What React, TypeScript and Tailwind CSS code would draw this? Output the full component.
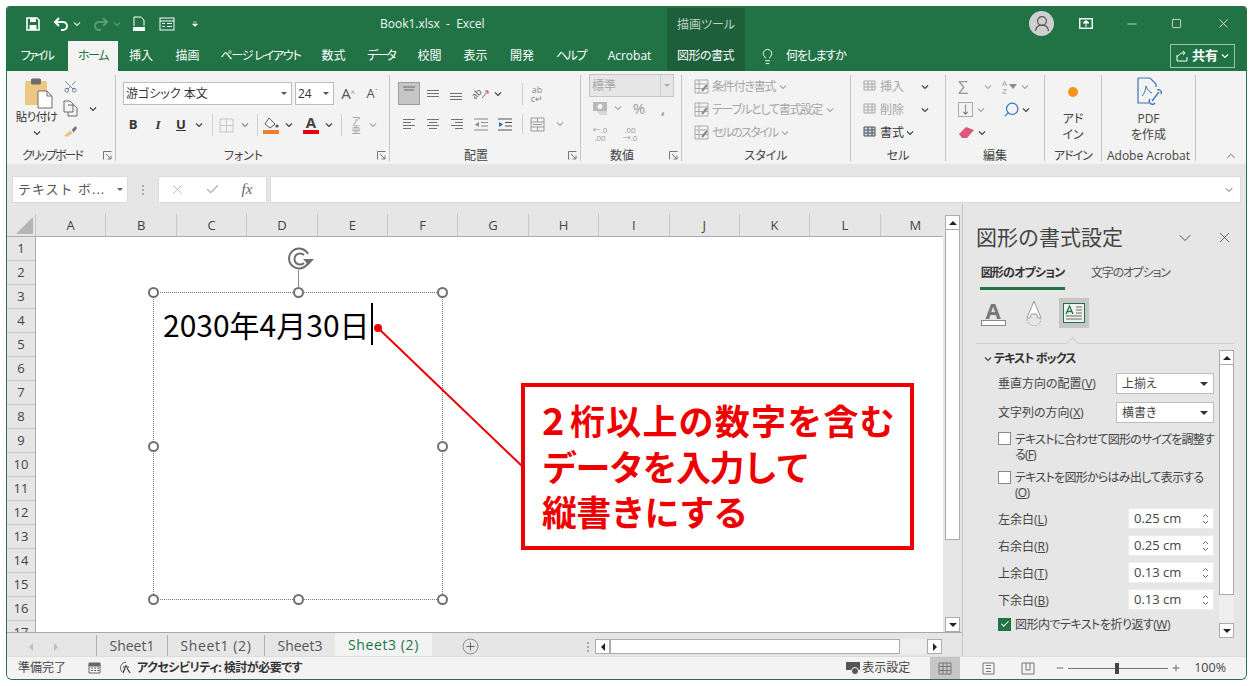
import React from 'react';
import { ChevronDown, ChevronUp, Lightbulb, Search, Scissors, X, Check, Minus, Plus, Square } from 'lucide-react';

const Chev = ({ className = 'text-[#444]' }: { className?: string }) => (
  <svg width="8" height="6" viewBox="0 0 8 6" className={`shrink-0 ${className}`}>
    <path d="M1 1.5 L4 4.5 L7 1.5" fill="none" stroke="currentColor" strokeWidth="1.2" />
  </svg>
);

const Launcher = () => (
  <svg width="9" height="9" viewBox="0 0 9 9" className="absolute right-[3px] bottom-[1px] text-[#777]">
    <path d="M0.5 8.5V0.5H8.5M3 3L8 8M8 4.5V8H4.5" fill="none" stroke="currentColor" />
  </svg>
);

const Group = ({ w, label, launcher, labelClass = '', children }: { w: string; label: string; launcher?: boolean; labelClass?: string; children?: React.ReactNode }) => (
  <div className={`${w} relative shrink-0 h-[86px] mt-[4px] border-r border-[#c6c6c6] flex flex-col`}>
    <div className="h-[73px] shrink-0 relative">{children}</div>
    <div className={`text-[12px] leading-[16px] text-center text-[#444] whitespace-nowrap ${launcher ? 'pr-[18px]' : ''} ${labelClass}`}>{label}</div>
    {launcher && <Launcher />}
  </div>
);

const Slot = ({ w, children }: { w: string; children?: React.ReactNode }) => (
  <div className={`${w} shrink-0 flex items-center justify-center`}>{children}</div>
);

const VSep = () => <div className="w-px h-[22px] bg-[#d0d0d0] shrink-0" />;

const Lines = ({ pattern }: { pattern: 'left' | 'center' | 'right' }) => (
  <svg width="14" height="12" viewBox="0 0 14 12" className="text-[#707070]">
    {pattern === 'left' && <path d="M1 1.5H13M1 4.5H9M1 7.5H13M1 10.5H9" stroke="currentColor" />}
    {pattern === 'center' && <path d="M1 1.5H13M3 4.5H11M1 7.5H13M3 10.5H11" stroke="currentColor" />}
    {pattern === 'right' && <path d="M1 1.5H13M5 4.5H13M1 7.5H13M5 10.5H13" stroke="currentColor" />}
  </svg>
);

const Clipboard = () => (
  <svg width="28" height="31" viewBox="0 0 28 31" className="ml-[5px]">
    <rect x="0" y="3" width="22" height="24" rx="1.5" fill="#ecc782" />
    <rect x="6" y="0.500" width="10" height="6" rx="1.5" fill="#6d6d6d" />
    <path d="M13 13H22L27 18V30H13Z" fill="#fff" stroke="#6d6d6d" />
    <path d="M22 13V18H27" fill="none" stroke="#6d6d6d" />
  </svg>
);

const RotateHandle = () => (
  <svg width="28" height="26" viewBox="0 0 28 26" className="text-[#6e6e6e]">
    <path d="M21 17A10 10 0 1 1 21 8" fill="none" stroke="currentColor" strokeWidth="2" />
    <path d="M17 17A5.6 5.6 0 1 1 17 9" fill="none" stroke="currentColor" strokeWidth="2" />
    <path d="M16 13H27L21.5 19Z" fill="currentColor" />
  </svg>
);

const tabs: { t: string; w: string; c?: string }[] = [
  { t: '挿入', w: 'w-[46px]' },
  { t: '描画', w: 'w-[47px]' },
  { t: 'ページ レイアウト', w: 'w-[99px]', c: 'tracking-[-1.2px]' },
  { t: '数式', w: 'w-[47px]' },
  { t: 'データ', w: 'w-[48px]', c: 'tracking-[-2px]' },
  { t: '校閲', w: 'w-[49px]' },
  { t: '表示', w: 'w-[43px]' },
  { t: '開発', w: 'w-[50px]' },
  { t: 'ヘルプ', w: 'w-[48px]', c: 'tracking-[-1.5px]' },
  { t: 'Acrobat', w: 'w-[69px]' },
];

const styleRows = [
  { t: '条件付き書式', c: 'tracking-[-1.2px]' },
  { t: 'テーブルとして書式設定', c: 'tracking-[-1.2px]' },
  { t: 'セルのスタイル', c: 'tracking-[-1.7px]' },
];

const cols = ['A', 'B', 'C', 'D', 'E', 'F', 'G', 'H', 'I', 'J', 'K', 'L', 'M'];
const rows = Array.from({ length: 17 }, (_, i) => i + 1);

const handleX = ['left-[-6px]', 'left-[139px]', 'right-[-6px]'];

const Handle = ({ pos }: { pos: string }) => (
  <div className={`absolute ${pos} w-[11px] h-[11px] rounded-full bg-white border-2 border-[#707070]`} />
);

const Spin = ({ label, u, val }: { label: string; u: string; val: string }) => (
  <div className="flex items-center h-[21px] mb-[6px]">
    <span className="w-[152px] pl-[22px] pt-[3px] text-[12px] text-[#444] whitespace-nowrap">
      {label}(<span className="underline">{u}</span>)
    </span>
    <div className="w-[86px] h-[21px] bg-white border border-[#ececec] flex items-center pl-[5px] pr-[4px] justify-between text-[13px] text-[#444]">
      <span className="pt-[1px]">{val}</span>
      <svg width="7" height="12" viewBox="0 0 7 12" className="text-[#666]">
        <path d="M1 4L3.5 1.5L6 4M1 8L3.5 10.5L6 8" fill="none" stroke="currentColor" />
      </svg>
    </div>
  </div>
);

const Combo = ({ label, u, val }: { label: string; u: string; val: string }) => (
  <div className="flex items-center h-[21px] mb-[8px]">
    <span className="w-[140px] pl-[22px] pt-[1px] text-[12px] text-[#444] whitespace-nowrap">
      {label}(<span className="underline">{u}</span>)
    </span>
    <div className="w-[98px] h-[21px] bg-white border border-[#bdbdbd] flex items-center pl-[5px] pr-[5px] justify-between text-[12px] text-[#444]">
      <span>{val}</span>
      <span className="w-0 h-0 border-x-[4px] border-x-transparent border-t-[4px] border-t-[#333]" />
    </div>
  </div>
);

const ScrollBtn = ({ dir }: { dir: 'up' | 'down' | 'left' | 'right' }) => (
  <div className="w-[15px] h-[15px] bg-white border border-[#ababab] flex items-center justify-center shrink-0">
    {dir === 'up' && <span className="w-0 h-0 border-x-[4px] border-x-transparent border-b-[4px] border-b-[#222]" />}
    {dir === 'down' && <span className="w-0 h-0 border-x-[4px] border-x-transparent border-t-[4px] border-t-[#222]" />}
    {dir === 'left' && <span className="w-0 h-0 border-y-[4px] border-y-transparent border-r-[4px] border-r-[#222]" />}
    {dir === 'right' && <span className="w-0 h-0 border-y-[4px] border-y-transparent border-l-[4px] border-l-[#222]" />}
  </div>
);

const App = () => {
  return (
    <div className="w-[1253px] h-[686px] bg-white pl-[6px] pt-[6px] overflow-hidden font-['Open_Sans','Noto_Sans_CJK_JP',sans-serif] [font-feature-settings:'palt']">
      <div className="w-[1241px] h-[674px] flex flex-col rounded-b-[6px] rounded-t-[4px] overflow-hidden border-x border-b border-[#217346] bg-[#e6e6e6]">
        {/* Title bar */}
        <div className="h-[35px] shrink-0 bg-[#217346] flex items-center text-white relative">
          <div className="flex items-center pl-[18px] w-[373px]">
            <svg width="16" height="16" viewBox="0 0 16 16" className="mr-[12px]">
              <path d="M2 2H12L14 4V14H2Z" fill="none" stroke="#fff" strokeWidth="1.6" />
              <rect x="5" y="2" width="6" height="4" fill="#fff" />
              <rect x="4.5" y="9" width="7" height="5" fill="#fff" />
            </svg>
            <svg width="16" height="14" viewBox="0 0 16 14" className="mr-[4px]">
              <path d="M6 1L2 5L6 9M2 5H10A4 4 0 0 1 10 13H8" fill="none" stroke="#fff" strokeWidth="2" />
            </svg>
            <Chev className="text-[#cfe3d6] mr-[12px]" />
            <svg width="16" height="14" viewBox="0 0 16 14" className="mr-[4px]">
              <path d="M10 1L14 5L10 9M14 5H6A4 4 0 0 0 6 13H8" fill="none" stroke="#5f9a78" strokeWidth="2" />
            </svg>
            <Chev className="text-[#5f9a78] mr-[11px]" />
            <svg width="14" height="16" viewBox="0 0 14 16" className="mr-[13px]">
              <path d="M2 1H9L12 4V10M2 1V10" fill="none" stroke="#fff" />
              <rect x="1" y="11" width="12" height="4" fill="#fff" />
            </svg>
            <svg width="16" height="14" viewBox="0 0 16 14" className="mr-[17px]">
              <rect x="1" y="1" width="14" height="12" fill="none" stroke="#fff" />
              <path d="M1 4H15M3 6.5H6M8 6.5H13M3 9.5H6M8 9.5H13" stroke="#fff" />
            </svg>
            <svg width="6" height="6" viewBox="0 0 6 6"><path d="M1 1H5M0.5 3L3 5.5L5.5 3Z" stroke="#fff" fill="#fff" strokeWidth="0.6" /></svg>
          </div>
          <span className="w-[287px] text-[12px] whitespace-pre text-[#f2f7f4]">Book1.xlsx  -  Excel</span>
          <div className="w-[78px] h-[33px] mt-[2px] bg-[#1e5f3b] flex items-center justify-center text-[12px] text-[#b9d3c3]">描画ツール</div>
          <div className="flex-1 flex items-center justify-end pr-[15px]">
            <div className="w-[25px] h-[25px] rounded-full bg-[#cfcfcf] flex items-center justify-center mr-[25px]">
              <svg width="16" height="17" viewBox="0 0 16 17">
                <circle cx="8" cy="6" r="4.4" fill="none" stroke="#555" strokeWidth="1.2" />
                <path d="M1.5 16C2 12 5 10.2 8 10.2S14 12 14.5 16" fill="none" stroke="#555" strokeWidth="1.2" />
              </svg>
            </div>
            <svg width="14" height="11" viewBox="0 0 14 11" className="mr-[32px]">
              <rect x="0.75" y="0.75" width="12.5" height="9.5" fill="none" stroke="#fff" strokeWidth="1.4" />
              <path d="M4 5L7 2.5L10 5ZM7 4V9" stroke="#fff" fill="#fff" />
            </svg>
            <Minus size={14} strokeWidth={1.2} className="mr-[32px]" />
            <Square size={11} strokeWidth={1.6} className="mr-[34px]" />
            <X size={15} strokeWidth={1.2} />
          </div>
        </div>

        {/* Tabs */}
        <div className="h-[30px] shrink-0 bg-[#217346] flex items-center text-white text-[12px] relative">
          <div className="w-[61px] text-center pr-[2px] tracking-[-2.5px]">ファイル</div>
          <div className="w-[50px] h-full bg-[#f3f3f3] text-[#217346] flex items-center justify-center tracking-[-1.5px]">ホーム</div>
          {tabs.map((tab) => (
            <div key={tab.t} className={`${tab.w} text-center whitespace-nowrap ${tab.c ?? ''}`}>{tab.t}</div>
          ))}
          <div className="w-[78px] h-full bg-[#1e5f3b] flex items-center justify-start pl-[10px] ml-[3px] whitespace-nowrap tracking-[-0.5px]">図形の書式</div>
          <Lightbulb size={17} strokeWidth={1.3} className="ml-[14px] mr-[10px]" />
          <span className="tracking-[-1.2px]">何をしますか</span>
          <div className="ml-auto mr-[11px] w-[65px] h-[24px] border border-[#9cc7ae] flex items-center justify-center gap-[3px]">
            <svg width="13" height="12" viewBox="0 0 13 12">
              <path d="M1 5V11H11V7M1 7L5 3H9M7 1L9 3L7 5" fill="none" stroke="#fff" />
            </svg>
            <span className="font-bold text-[13px]">共有</span>
            <Chev className="text-white" />
          </div>
        </div>

        {/* Ribbon */}
        <div className="h-[93px] shrink-0 bg-[#f3f3f3] flex">
          <Group w="w-[109px]" label="クリップボード" launcher labelClass="tracking-[-2px]">
            <div className="flex h-full">
              <div className="w-[55px] pl-[4px] pt-[3px] flex flex-col items-center">
                <Clipboard />
                <span className="text-[11.5px] leading-[16px] whitespace-nowrap text-[#333] tracking-[-0.6px]">貼り付け</span>
                <span className="mt-[5px]"><Chev /></span>
              </div>
              <div className="w-[16px] flex flex-col items-center pt-[4px]">
                <Scissors size={15} strokeWidth={1.2} className="text-[#44638f] -rotate-90" />
                <svg width="15" height="17" viewBox="0 0 15 17" className="text-[#6b6b6b] mt-[6px]">
                  <path d="M1 1H7L10 4V12H1ZM5 5H11L14 8V16H5V12" fill="#f3f3f3" stroke="currentColor" />
                </svg>
                <svg width="15" height="13" viewBox="0 0 17 14" className="mt-[8px]">
                  <path d="M1 12L8 6L11 9L5 13Z" fill="#e9c27c" />
                  <path d="M10 5L14 1L16 3L12 8Z" fill="#707070" />
                </svg>
              </div>
              <div className="pl-[11px] pt-[31px]"><Chev /></div>
            </div>
          </Group>

          <Group w="w-[274px]" label="フォント" launcher>
            <div className="pl-[7px] pt-[7px] flex flex-col gap-[9px]">
              <div className="flex items-center h-[23px]">
                <div className="w-[169px] h-[23px] bg-white border border-[#bdbdbd] flex items-center justify-between px-[2px] pr-[4px] text-[12px] text-[#333]">
                  <span>游ゴシック 本文</span>
                  <span className="w-0 h-0 border-x-[3px] border-x-transparent border-t-[3px] border-t-[#555]" />
                </div>
                <div className="w-[39px] ml-[3px] h-[23px] bg-white border border-[#bdbdbd] flex items-center justify-between px-[2px] pr-[4px] text-[12px] text-[#333]">
                  <span>24</span>
                  <span className="w-0 h-0 border-x-[3px] border-x-transparent border-t-[3px] border-t-[#555]" />
                </div>
                <span className="ml-[2px] w-[24px] text-center text-[15px] text-[#555]">A<sup className="text-[7px] text-[#3b74b5]">^</sup></span>
                <span className="w-[24px] text-center text-[13px] text-[#555]">A<sup className="text-[7px] text-[#3b74b5]">ˇ</sup></span>
              </div>
              <div className="flex items-center h-[22px] text-[13px] text-[#333]">
                <Slot w="w-[20px]"><span className="font-bold">B</span></Slot>
                <Slot w="w-[30px]"><span className="italic font-bold font-['Liberation_Serif']">I</span></Slot>
                <Slot w="w-[16px]"><span className="font-bold underline">U</span></Slot>
                <Slot w="w-[20px]"><Chev /></Slot>
                <Slot w="w-[6px]"><VSep /></Slot>
                <Slot w="w-[22px]">
                  <svg width="15" height="15" viewBox="0 0 15 15"><path d="M1 1H14V14H1ZM7.5 1V14M1 7.5H14" fill="none" stroke="#c8c8c8" /></svg>
                </Slot>
                <Slot w="w-[16px]"><Chev className="text-[#888]" /></Slot>
                <Slot w="w-[8px]"><VSep /></Slot>
                <Slot w="w-[20px]">
                  <svg width="17" height="17" viewBox="0 0 17 17">
                    <path d="M6 1L12 7L7 11L2 7Z" fill="#fff" stroke="#555" />
                    <circle cx="14" cy="9" r="1.6" fill="#555" />
                    <rect x="0" y="13" width="16" height="4" fill="#ed7d31" />
                  </svg>
                </Slot>
                <Slot w="w-[16px]"><Chev /></Slot>
                <Slot w="w-[28px]">
                  <div className="flex flex-col items-center leading-none">
                    <span className="text-[15px] font-bold text-[#444] leading-[13px]">A</span>
                    <span className="w-[16px] h-[4px] bg-[#e60012] mt-[1px]" />
                  </div>
                </Slot>
                <Slot w="w-[8px]"><Chev /></Slot>
                <Slot w="w-[16px]"><VSep /></Slot>
                <Slot w="w-[14px]"><span className="text-[9px] leading-[9px] text-[#999] w-[10px] text-center">ア亜</span></Slot>
                <Slot w="w-[20px]"><Chev className="text-[#aaa]" /></Slot>
              </div>
            </div>
          </Group>

          <Group w="w-[191px]" label="配置" launcher>
            <div className="pl-[8px] pt-[7px] flex flex-col gap-[10px]">
              <div className="flex items-center h-[23px]">
                <div className="w-[22px] h-[23px] bg-[#c6c6c6] border border-[#9d9d9d] flex items-start justify-center pt-[3px]">
                  <svg width="14" height="6" viewBox="0 0 14 6"><path d="M1 1H13M2 4H12" stroke="#666" /></svg>
                </div>
                <Slot w="w-[26px]">
                  <svg width="14" height="9" viewBox="0 0 14 9"><path d="M1 1.5H13M1 4.5H13M1 7.5H13" stroke="#707070" /></svg>
                </Slot>
                <Slot w="w-[20px]">
                  <svg width="14" height="12" viewBox="0 0 14 12"><path d="M1 5.5H13M1 8.5H13M1 11.5H13" stroke="#707070" /></svg>
                </Slot>
                <Slot w="w-[28px]">
                  <div className="flex items-center">
                    <span className="text-[9px] leading-none text-[#555] -rotate-45">ab</span>
                    <svg width="8" height="12" viewBox="0 0 8 12"><path d="M1 10L7 3M4 3H7V6" fill="none" stroke="#bf4d6a" /></svg>
                  </div>
                </Slot>
                <Chev />
                <div className="w-px h-[22px] bg-[#d0d0d0] ml-[20px]" />
                <Slot w="w-[20px] ml-[4px]">
                  <span className="text-[9px] leading-[9px] text-[#888] text-center">ab<br />c↵</span>
                </Slot>
              </div>
              <div className="flex items-center h-[18px]">
                <Slot w="w-[22px]"><Lines pattern="left" /></Slot>
                <Slot w="w-[26px]"><Lines pattern="center" /></Slot>
                <Slot w="w-[22px]"><Lines pattern="right" /></Slot>
                <Slot w="w-[26px]">
                  <svg width="16" height="13" viewBox="0 0 16 13"><path d="M1 1H15M8 4.5H15M8 8H15M1 12H15" stroke="#888" /><path d="M6 4L2 6.5L6 9Z" fill="#7a8fa8" /></svg>
                </Slot>
                <Slot w="w-[22px]">
                  <svg width="16" height="13" viewBox="0 0 16 13"><path d="M1 1H15M8 4.5H15M8 8H15M1 12H15" stroke="#555" /><path d="M2 4L6 6.5L2 9Z" fill="#2f6ca8" /></svg>
                </Slot>
                <Slot w="w-[12px]"><div className="w-px h-[20px] bg-[#d0d0d0]" /></Slot>
                <Slot w="w-[18px]">
                  <svg width="15" height="15" viewBox="0 0 15 15"><path d="M1 1H14V14H1ZM1 5H14M1 10H14M7.5 1V5M7.5 10V14M3 7.5H12" fill="none" stroke="#999" /></svg>
                </Slot>
                <Slot w="w-[28px]"><Chev className="text-[#aaa]" /></Slot>
              </div>
            </div>
          </Group>

          <Group w="w-[101px]" label="数値" launcher>
            <div className="pl-[8px] -mt-[1px] flex flex-col">
              <div className="w-[85px] h-[23px] bg-[#e6e6e6] border border-[#c6c6c6] flex items-center justify-between text-[12px] text-[#a6a6a6] pl-[2px]">
                <span>標準</span>
                <span className="w-[13px] h-full border-l border-[#d0d0d0] flex items-center justify-center">
                  <span className="w-0 h-0 border-x-[3px] border-x-transparent border-t-[3px] border-t-[#aaa]" />
                </span>
              </div>
              <div className="flex items-center h-[22px] text-[#9a9a9a]">
                <Slot w="w-[22px]">
                  <svg width="16" height="15" viewBox="0 0 16 15"><rect x="1" y="1" width="14" height="9" fill="#b9b9b9" /><circle cx="8" cy="5.5" r="2.6" fill="#f3f3f3" /><path d="M5 11H15M7 13H15" stroke="#bbb" /></svg>
                </Slot>
                <Slot w="w-[14px]"><Chev className="text-[#aaa]" /></Slot>
                <Slot w="w-[28px]"><span className="text-[15px]">%</span></Slot>
                <Slot w="w-[20px]"><span className="text-[14px] font-bold">,</span></Slot>
              </div>
              <div className="flex items-center h-[22px] mt-[4px] text-[8px] leading-[8px] text-[#9a9a9a]">
                <Slot w="w-[22px]"><span className="text-center">←.0<br />.00</span></Slot>
                <Slot w="w-[30px] ml-[4px]"><span className="text-center">.00<br />→.0</span></Slot>
              </div>
            </div>
          </Group>

          <Group w="w-[169px]" label="スタイル">
            <div className="pl-[12px] flex flex-col text-[12px] text-[#a6a6a6] whitespace-nowrap">
              {styleRows.map((s) => (
                <div key={s.t} className="h-[23px] flex items-center">
                  <svg width="15" height="15" viewBox="0 0 15 15" className="mr-[3px]">
                    <path d="M1 1H14V14H1ZM1 5H14M1 9.500H14M5 1V14" fill="none" stroke="#aaa" />
                    <path d="M8 12L13 6" stroke="#888" strokeWidth="2" />
                  </svg>
                  <span className={`${s.c} mr-[4px]`}>{s.t}</span>
                  <Chev className="text-[#aaa]" />
                </div>
              ))}
            </div>
          </Group>

          <Group w="w-[95px]" label="セル">
            <div className="pl-[11px] flex flex-col text-[12px] whitespace-nowrap">
              {[
                { t: '挿入', c: 'text-[#a6a6a6]' },
                { t: '削除', c: 'text-[#a6a6a6]' },
                { t: '書式', c: 'text-[#333]' },
              ].map((r, i) => (
                <div key={r.t} className={`h-[23px] flex items-center ${r.c}`}>
                  <svg width="15" height="15" viewBox="0 0 15 15" className="mr-[3px]">
                    <path d="M2 2H13V11H2ZM2 5H13M2 8H13M6 2V11M10 2V11" fill={i === 2 ? '#c5d9ee' : 'none'} stroke={i === 2 ? '#555' : '#aaa'} />
                  </svg>
                  <span>{r.t}</span>
                  <span className={i === 2 ? 'ml-[2px]' : 'ml-[17px]'}><Chev /></span>
                </div>
              ))}
            </div>
          </Group>

          <Group w="w-[99px]" label="編集">
            <div className="pl-[12px] flex flex-col">
              <div className="h-[23px] flex items-center">
                <span className="w-[16px] text-[18px] leading-none text-[#999]">Σ</span>
                <span className="ml-[10px]"><Chev className="text-[#aaa]" /></span>
                <span className="ml-[10px] text-[8px] leading-[8px] text-[#999] text-center">A<br />Z</span>
                <span className="ml-[2px] w-0 h-0 border-x-[4px] border-x-transparent border-t-[5px] border-t-[#888]" />
                <span className="ml-[4px]"><Chev className="text-[#aaa]" /></span>
              </div>
              <div className="h-[23px] flex items-center">
                <div className="w-[15px] h-[15px] border border-[#aaa] flex items-center justify-center text-[11px] leading-none text-[#666]">↓</div>
                <span className="ml-[4px]"><Chev className="text-[#aaa]" /></span>
                <Search size={17} strokeWidth={1.6} className="ml-[18px] text-[#2f6fb5] -scale-x-100" />
                <span className="ml-[2px]"><Chev /></span>
              </div>
              <div className="h-[23px] flex items-center">
                <svg width="17" height="13" viewBox="0 0 17 13"><path d="M1 8L8 1L16 4L9 12L4 12Z" fill="#e0567a" /></svg>
                <span className="ml-[3px]"><Chev /></span>
              </div>
            </div>
          </Group>

          <Group w="w-[57px]" label="アドイン" labelClass="tracking-[-1px]">
            <div className="flex flex-col items-center h-full text-[12px] leading-[16px] text-[#444]">
              <span className="w-[10px] h-[10px] rounded-full bg-[#f7941d] mt-[12px] mb-[14px]" />
              <span>アド</span>
              <span>イン</span>
            </div>
          </Group>

          <Group w="w-[94px]" label="Adobe Acrobat">
            <div className="flex flex-col items-center h-full text-[12px] leading-[16px] text-[#444]">
              <svg width="26" height="28" viewBox="0 0 26 28" className="mb-[6px] mt-[2px]">
                <path d="M2 1H14L20 7V10M2 1V26H13" fill="none" stroke="#3b74b5" strokeWidth="1.2" />
                <path d="M6 19C9 16 10 11 10 9C11 12 13 15 16 16" fill="none" stroke="#3b74b5" />
                <path d="M16 24L23 15M14 22A3 3 0 0 0 19 26M21 13A3 3 0 0 1 25 17" fill="none" stroke="#3b74b5" strokeWidth="1.3" />
              </svg>
              <span>PDF</span>
              <span>を作成</span>
            </div>
          </Group>

          <div className="flex-1 flex items-end justify-end pr-[8px] pb-[1px]">
            <ChevronUp size={14} strokeWidth={1.4} className="text-[#555]" />
          </div>
        </div>

        {/* Formula bar */}
        <div className="h-[40px] shrink-0 flex items-end pb-[1px] pl-[5px] pr-[5px] bg-[#e6e6e6]">
          <div className="w-[116px] h-[27px] bg-white border border-[#dcdcdc] flex items-center justify-between pl-[5px] pr-[4px] text-[13px] text-[#555] [font-feature-settings:normal] tracking-[1px]">
            <span className="whitespace-nowrap">テキスト ボ...</span>
            <span className="w-0 h-0 border-x-[3px] border-x-transparent border-t-[3px] border-t-[#666]" />
          </div>
          <div className="w-[30px] h-[27px] flex flex-col items-center justify-center gap-[2px]">
            <span className="w-[2px] h-[2px] bg-[#aaa]" />
            <span className="w-[2px] h-[2px] bg-[#aaa]" />
            <span className="w-[2px] h-[2px] bg-[#aaa]" />
          </div>
          <div className="w-[109px] h-[27px] bg-white border border-[#dcdcdc] flex items-center text-[#aaa]">
            <Slot w="w-[36px]"><X size={15} strokeWidth={1.3} /></Slot>
            <Slot w="w-[35px]"><Check size={15} strokeWidth={1.8} /></Slot>
            <Slot w="w-[34px]"><span className="font-['Liberation_Serif'] italic text-[15px] text-[#666]">fx</span></Slot>
          </div>
          <div className="flex-1 h-[27px] ml-[3px] bg-white border border-[#dcdcdc] flex items-center justify-end pr-[5px]">
            <ChevronDown size={12} strokeWidth={2} className="text-[#666]" />
          </div>
        </div>

        {/* Main */}
        <div className="flex-1 flex min-h-0">
          <div className="w-[955px] shrink-0 flex flex-col">
            <div className="h-[10px] shrink-0" />
            <div className="h-[419px] shrink-0 flex border-b border-[#a8a8a8]">
              <div className="w-[936px] shrink-0 flex flex-col overflow-hidden">
                <div className="h-[23px] shrink-0 flex bg-[#e6e6e6] border-b border-[#ababab]">
                  <div className="w-[29px] shrink-0 border-r border-[#c6c6c6] flex items-end justify-end pr-[2px] pb-[2px]">
                    <div className="w-0 h-0 border-l-[17px] border-l-transparent border-b-[17px] border-b-[#b4b4b4]" />
                  </div>
                  {cols.map((c) => (
                    <div key={c} className="w-[70.4px] shrink-0 border-r border-[#c6c6c6] text-center text-[13px] leading-[22px] text-[#444]">{c}</div>
                  ))}
                </div>
                <div className="flex-1 flex min-h-0">
                  <div className="w-[29px] shrink-0 bg-[#e6e6e6] border-r border-[#ababab] overflow-hidden">
                    {rows.map((r) => (
                      <div key={r} className="h-[24px] border-b border-[#c6c6c6] text-center text-[13px] leading-[23px] text-[#444]">{r}</div>
                    ))}
                  </div>
                  <div className="flex-1 bg-white relative overflow-hidden">
                    {/* text box */}
                    <div className="absolute left-[117px] top-[55px] w-[290px] h-[308px] border border-dotted border-[#777]">
                      {handleX.map((x) => (
                        <React.Fragment key={x}>
                          <Handle pos={`${x} top-[-6px]`} />
                          <Handle pos={`${x} bottom-[-6px]`} />
                        </React.Fragment>
                      ))}
                      <Handle pos="left-[-6px] top-[148px]" />
                      <Handle pos="right-[-6px] top-[148px]" />
                      <div className="absolute left-[144px] top-[-23px] w-px h-[18px] bg-[#8a8a8a]" />
                      <div className="absolute left-[133px] top-[-47px]"><RotateHandle /></div>
                      <div className="absolute left-[9px] top-[9px] flex items-center h-[44px] font-['Noto_Sans_CJK_JP',sans-serif] text-[30px] text-black whitespace-nowrap [font-feature-settings:normal]">
                        <span>2030年4月30日</span>
                        <span className="w-[2px] h-[42px] bg-black ml-[1px]" />
                      </div>
                    </div>
                    {/* callout line */}
                    <svg className="absolute inset-0 pointer-events-none" width="907" height="395" viewBox="0 0 907 395">
                      <circle cx="342" cy="91" r="4" fill="#ee0000" />
                      <path d="M342 91L488 231" stroke="#ee0000" strokeWidth="2" />
                    </svg>
                    <div className="absolute left-[485px] top-[146px] w-[393px] h-[167px] bg-white border-[4px] border-[#ee0000] pl-[17px] pt-[9px] font-['Noto_Sans_CJK_JP',sans-serif] [font-feature-settings:normal] font-bold text-[35px] leading-[45.5px] text-[#ee0000]">
                      <div className="whitespace-nowrap tracking-[1.2px]"><span className="inline-block w-[28px] text-[38px]">2</span>桁以上の数字を含む</div>
                      <div className="whitespace-nowrap tracking-[-1.500px]">データを入力して</div>
                      <div className="whitespace-nowrap tracking-[-0.8px]">縦書きにする</div>
                    </div>
                  </div>
                </div>
              </div>
              <div className="flex-1 bg-[#e6e6e6] pl-[2px] pt-[1px] flex flex-col justify-between">
                <div className="flex flex-col">
                  <ScrollBtn dir="up" />
                  <div className="w-[15px] h-[310px] bg-white border-x border-b border-[#ababab]" />
                </div>
                <ScrollBtn dir="down" />
              </div>
            </div>
            {/* Sheet tabs */}
            <div className="flex-1 flex items-stretch text-[14px] text-[#555]">
              <div className="w-[89px] flex items-center pl-[22px] gap-[21px] shrink-0">
                <span className="w-0 h-0 border-y-[4px] border-y-transparent border-r-[4px] border-r-[#c0c0c0]" />
                <span className="w-0 h-0 border-y-[4px] border-y-transparent border-l-[4px] border-l-[#c0c0c0]" />
              </div>
              <div className="w-[71px] border-l border-[#b0b0b0] mt-[2px] mb-[4px] flex items-center justify-center">Sheet1</div>
              <div className="w-[97px] border-l border-[#b0b0b0] mt-[2px] mb-[4px] flex items-center justify-center tracking-[0.6px]">Sheet1 (2)</div>
              <div className="w-[71px] border-l border-[#b0b0b0] mt-[2px] mb-[4px] flex items-center justify-center">Sheet3</div>
              <div className="w-[97px] bg-[#f3f3f3] border-b-2 border-[#217346] mb-[1px] pb-[2px] flex items-center justify-center text-[#217346] tracking-[0.6px]">Sheet3 (2)</div>
              <div className="w-[148px] flex items-center pl-[30px] shrink-0">
                <svg width="17" height="17" viewBox="0 0 17 17">
                  <circle cx="8.500" cy="8.500" r="7.500" fill="none" stroke="#8a8a8a" />
                  <path d="M8.500 4.500V12.500M4.500 8.500H12.500" stroke="#666" />
                </svg>
              </div>
              <div className="w-[15px] flex flex-col items-center justify-center gap-[2px]">
                <span className="w-[2px] h-[2px] bg-[#aaa]" />
                <span className="w-[2px] h-[2px] bg-[#aaa]" />
                <span className="w-[2px] h-[2px] bg-[#aaa]" />
              </div>
              <div className="w-[347px] flex items-center">
                <ScrollBtn dir="left" />
                <div className="w-[290px] h-[15px] bg-white border border-[#ababab]" />
                <div className="w-[27px] h-[15px] bg-[#eeeeee]" />
                <ScrollBtn dir="right" />
              </div>
            </div>
          </div>

          {/* Format pane */}
          <div className="flex-1 border-l border-[#c6c6c6] flex flex-col bg-[#e6e6e6]">
            <div className="h-[53px] shrink-0 flex items-center pl-[13px] pr-[13px] pt-[14px] text-[#444]">
              <span className="text-[21px] font-normal whitespace-nowrap [font-feature-settings:normal]">図形の書式設定</span>
              <ChevronDown size={20} strokeWidth={1.1} className="ml-auto mr-[21px]" />
              <X size={17} strokeWidth={1.1} />
            </div>
            <div className="h-[30px] shrink-0 flex pl-[17px] text-[12px] pt-[7px]">
              <div className="w-[85px] h-[26px] border-b-[3px] border-[#217346] text-center font-bold text-[#333] whitespace-nowrap tracking-[-0.8px]">図形のオプション</div>
              <div className="ml-[26px] text-[#555] whitespace-nowrap tracking-[-1.2px]">文字のオプション</div>
            </div>
            <div className="h-[30px] mt-[11px] shrink-0 flex items-center pl-[17px]">
              <div className="w-[26px] flex flex-col items-center text-[#777]">
                <span className="text-[22px] leading-[18px] font-bold">A</span>
                <span className="w-[25px] h-[6px] border border-[#888] bg-white mt-[1px]" />
              </div>
              <div className="w-[18px] ml-[19px] flex items-center justify-center">
                <svg width="18" height="26" viewBox="0 0 18 26">
                  <path d="M9 1L16 18H13L11.500 14H6.500L5 18H2Z" fill="#fff" stroke="#999" />
                  <path d="M2 19A7 7 0 0 0 16 19" fill="none" stroke="#aaa" strokeDasharray="2 1" />
                </svg>
              </div>
              <div className="w-[30px] h-[30px] ml-[16px] bg-[#c6c6c6] flex items-center justify-center">
                <svg width="22" height="20" viewBox="0 0 22 20">
                  <rect x="0.500" y="0.500" width="21" height="19" fill="#eef3ee" stroke="#217346" />
                  <path d="M13 4H19M13 7H19M13 10H19M3 13H19M3 16H19" stroke="#666" />
                  <path d="M3 11L6.500 3L10 11M4.500 8.500H8.500" fill="none" stroke="#217346" strokeWidth="1.300" />
                </svg>
              </div>
            </div>
            <div className="h-[16px] shrink-0 relative ml-[13px] mr-[12px] border-b border-[#cfcfcf]">
              <div className="absolute left-[92px] top-[11px] w-[9px] h-[9px] rotate-45 bg-[#e6e6e6] border-l border-t border-[#cfcfcf]" />
            </div>
            <div className="flex-1 flex min-h-0 pl-[13px]">
              <div className="w-[243px] shrink-0 pt-[6px] relative">
                <div className="flex items-center h-[18px] mb-[5px] text-[12px] font-bold text-[#333] pl-[8px]">
                  <Chev />
                  <span className="ml-[2px] whitespace-nowrap tracking-[-0.9px]">テキスト ボックス</span>
                </div>
                <Combo label="垂直方向の配置" u="V" val="上揃え" />
                <Combo label="文字列の方向" u="X" val="横書き" />
                <div className="flex pl-[22px] text-[12px] leading-[15px] text-[#444] h-[39px] tracking-[-0.8px]">
                  <span className="w-[13px] h-[13px] bg-white border border-[#8a8a8a] mt-[1px] shrink-0" />
                  <span className="ml-[4px] whitespace-nowrap pt-[1px]">テキストに合わせて図形のサイズを調整す<br />る(<span className="underline">F</span>)</span>
                </div>
                <div className="flex pl-[22px] text-[12px] leading-[15px] text-[#444] h-[38px] tracking-[-0.7px]">
                  <span className="w-[13px] h-[13px] bg-white border border-[#8a8a8a] mt-[1px] shrink-0" />
                  <span className="ml-[4px] whitespace-nowrap">テキストを図形からはみ出して表示する<br />(<span className="underline">O</span>)</span>
                </div>
                <Spin label="左余白" u="L" val="0.25 cm" />
                <Spin label="右余白" u="R" val="0.25 cm" />
                <Spin label="上余白" u="T" val="0.13 cm" />
                <Spin label="下余白" u="B" val="0.13 cm" />
                <div className="flex items-center pl-[22px] text-[12px] text-[#444] h-[16px] tracking-[-0.5px]">
                  <span className="w-[13px] h-[13px] bg-[#217346] flex items-center justify-center shrink-0">
                    <Check size={10} strokeWidth={2.5} className="text-white" />
                  </span>
                  <span className="ml-[4px] pt-[2px] whitespace-nowrap">図形内でテキストを折り返す(<span className="underline">W</span>)</span>
                </div>
              </div>
              <div className="w-[15px] flex flex-col justify-between mt-[6px] mb-[18px] bg-[#eeeeee]">
                <div className="flex flex-col">
                  <ScrollBtn dir="up" />
                  <div className="w-[15px] h-[230px] bg-white border-x border-b border-[#ababab]" />
                </div>
                <ScrollBtn dir="down" />
              </div>
            </div>
          </div>
        </div>

        {/* Status bar */}
        <div className="h-[23px] shrink-0 bg-[#f3f3f3] border-t border-[#dcdcdc] flex items-center text-[12px] text-[#444]">
          <span className="ml-[11px] w-[48px] whitespace-nowrap [font-feature-settings:normal]">準備完了</span>
          <svg width="13" height="12" viewBox="0 0 13 12" className="ml-[22px]">
            <path d="M1 3H12V11H1Z" fill="none" stroke="#666" />
            <path d="M1 1H12V4H1ZM3 6H5M6 6H8M9 6H11M3 8.500H5M6 8.500H8M9 8.500H11" fill="#666" stroke="#666" />
          </svg>
          <svg width="15" height="14" viewBox="0 0 15 14" className="ml-[17px]">
            <path d="M8 1A6 6 0 0 0 4 11" fill="none" stroke="#666" />
            <path d="M8 4V6M5 6H11M7 7L5 12M9 7L12 12" stroke="#333" strokeWidth="1.200" fill="none" />
          </svg>
          <span className="ml-[4px] font-bold whitespace-nowrap text-[#333] tracking-[-0.5px]">アクセシビリティ: 検討が必要です</span>
          <div className="ml-auto flex items-center h-full">
            <svg width="16" height="14" viewBox="0 0 16 14" className="mr-[1px]">
              <path d="M1 1H15V9H1Z" fill="#555" />
              <circle cx="10" cy="10" r="3.500" fill="#555" stroke="#f3f3f3" />
            </svg>
            <span className="whitespace-nowrap mr-[20px]">表示設定</span>
            <div className="w-[30px] h-full bg-[#c6c6c6] flex items-center justify-center">
              <svg width="14" height="13" viewBox="0 0 14 13"><path d="M1 1H13V12H1ZM5 1V12M9 1V12M1 4.500H13M1 8.500H13" fill="none" stroke="#777" /></svg>
            </div>
            <Slot w="w-[28px] ml-[14px]">
              <svg width="13" height="13" viewBox="0 0 13 13"><path d="M1 1H12V12H1ZM4 3.500H9M4 6.500H9M4 9.500H9" fill="none" stroke="#777" /></svg>
            </Slot>
            <Slot w="w-[28px] ml-[12px]">
              <svg width="14" height="13" viewBox="0 0 14 13"><path d="M1 1H13V12H1ZM5 1V8H9V1" fill="none" stroke="#777" /></svg>
            </Slot>
            <Minus size={10} className="ml-[13px] text-[#555]" />
            <div className="w-[100px] h-[1px] bg-[#777] mx-[3px] relative">
              <div className="absolute left-[47px] top-[-5px] w-[4px] h-[11px] bg-[#444]" />
            </div>
            <Plus size={10} className="text-[#555]" />
            <span className="ml-[13px] mr-[20px] text-[12.5px] whitespace-nowrap">100%</span>
          </div>
        </div>
      </div>
    </div>
  );
};

export default App;
